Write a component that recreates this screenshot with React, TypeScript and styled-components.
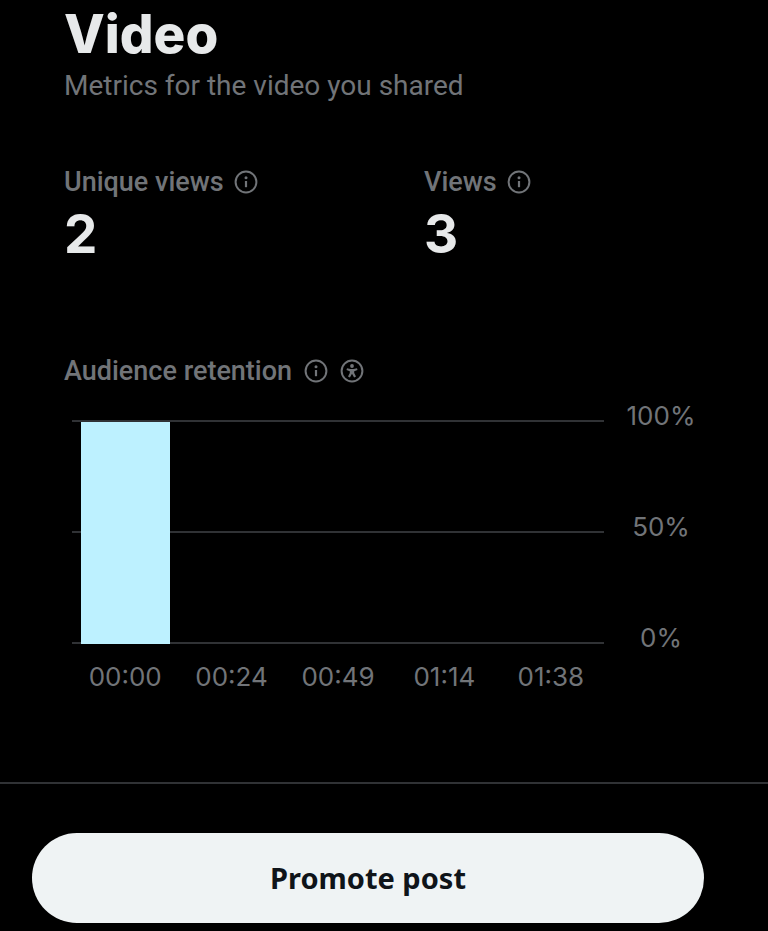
import React from "react";
import styled, { createGlobalStyle } from "styled-components";

const muted = "#717478";
const line = "#303235";

const GlobalStyle = createGlobalStyle`
  *, *::before, *::after { box-sizing: border-box; }
  body {
    margin: 0;
    background: #000;
    color: #e7e9ea;
    font-family: Roboto, "Noto Sans", sans-serif;
  }
  h1, h2, p, dl, dt, dd { margin: 0; font-weight: 400; }
`;

const Page = styled.main`
  display: flex;
  flex-direction: column;
`;

const Metrics = styled.section`
  padding: 0 0 89px 64px;
`;

const Title = styled.h1`
  && { font-weight: 800; }
  font-family: Inter, sans-serif;
  font-size: 53px;
  line-height: 68px;
`;

const Subtitle = styled.p`
  color: ${muted};
  font-size: 28px;
  line-height: 36px;
`;

const Stats = styled.dl`
  display: grid;
  grid-template-columns: 1fr 1fr;
  gap: 16px;
  padding-top: 60px;
`;

const Label = styled.dt`
  && { font-weight: 500; }
  display: flex;
  align-items: center;
  gap: 10px;
  color: ${muted};
  font-size: 27px;
  line-height: 36px;
`;

const Value = styled.dd`
  && { font-weight: 700; }
  font-family: Inter, sans-serif;
  font-size: 53px;
  line-height: 68px;
`;

const ChartHeading = styled.h2`
  && { font-weight: 500; }
  display: flex;
  align-items: center;
  gap: 12px;
  padding-top: 85px;
  color: ${muted};
  font-size: 27px;
  line-height: 36px;
`;

const IconButton = styled.button`
  display: flex;
  padding: 0;
  border: 0;
  background: none;
  color: inherit;
  cursor: pointer;
`;

const Chart = styled.div`
  display: grid;
  grid-template-columns: 1fr 114px;
  padding: 11px 50px 0 8px;
  color: ${muted};
  font-family: Inter, sans-serif;
  font-size: 26px;
  line-height: 32px;
`;

const Plot = styled.div`
  display: grid;
  height: 224px;
  margin-top: 20px;
`;

const GridLines = styled.div`
  grid-area: 1 / 1;
  display: flex;
  flex-direction: column;
  justify-content: space-between;
`;

const GridLine = styled.div`
  height: 2px;
  background: ${line};
`;

const Bars = styled.div`
  grid-area: 1 / 1;
  display: grid;
  grid-template-columns: repeat(5, 1fr);
  align-items: end;
  justify-items: center;
  padding-top: 2px;
`;

const Bar = styled.div`
  width: 84%;
  background: #bdf1ff;
`;

const YAxis = styled.div`
  display: flex;
  flex-direction: column;
  justify-content: space-between;
  align-items: center;
  height: 254px;
`;

const XAxis = styled.div`
  display: grid;
  grid-template-columns: repeat(5, 1fr);
  padding-top: 7px;
  text-align: center;
`;

const Footer = styled.footer`
  padding: 49px 64px 8px 32px;
  border-top: 2px solid ${line};
`;

const PromoteButton = styled.button`
  width: 100%;
  height: 90px;
  border: 0;
  border-radius: 45px;
  background: #eff3f4;
  color: #0f1419;
  font-family: "Noto Sans", sans-serif;
  font-weight: 700;
  font-size: 29px;
  line-height: 36px;
  cursor: pointer;
`;

const InfoIcon = () => (
  <svg width="24" height="24" viewBox="0 0 24 24" fill="none" aria-hidden="true">
    <circle cx="12" cy="12" r="10.4" stroke="currentColor" strokeWidth="2" />
    <circle cx="12" cy="7.7" r="1.5" fill="currentColor" />
    <path d="M12 11v6.2" stroke="currentColor" strokeWidth="2.2" />
  </svg>
);

const AccessibilityIcon = () => (
  <svg width="24" height="24" viewBox="0 0 24 24" fill="none" aria-hidden="true">
    <circle cx="12" cy="12" r="10.4" stroke="currentColor" strokeWidth="2" />
    <circle cx="12" cy="7" r="1.9" fill="currentColor" />
    <path
      d="M7 9.2l3.400.9h3.200l3.400-.9.500 1.900-3.300 1.100v1.700l1.800 3.700-1.900.9-2.100-3.700-2.100 3.700-1.900-.9 1.800-3.700v-1.700l-3.300-1.100z"
      fill="currentColor"
    />
  </svg>
);

const stats = [
  { label: "Unique views", value: 2 },
  { label: "Views", value: 3 },
];

const retention = [
  { time: "00:00", percent: 100 },
  { time: "00:24", percent: 0 },
  { time: "00:49", percent: 0 },
  { time: "01:14", percent: 0 },
  { time: "01:38", percent: 0 },
];

const ticks = [100, 50, 0];

export default function App() {
  return (
    <Page>
      <GlobalStyle />
      <Metrics>
        <Title>Video</Title>
        <Subtitle>Metrics for the video you shared</Subtitle>
        <Stats>
          {stats.map((stat) => (
            <div key={stat.label}>
              <Label>
                {stat.label}
                <IconButton type="button" aria-label={`About ${stat.label}`}>
                  <InfoIcon />
                </IconButton>
              </Label>
              <Value>{stat.value}</Value>
            </div>
          ))}
        </Stats>
        <ChartHeading>
          Audience retention
          <IconButton type="button" aria-label="About audience retention">
            <InfoIcon />
          </IconButton>
          <IconButton type="button" aria-label="Accessible chart">
            <AccessibilityIcon />
          </IconButton>
        </ChartHeading>
        <Chart>
          <Plot>
            <GridLines>
              {ticks.map((tick) => (
                <GridLine key={tick} />
              ))}
            </GridLines>
            <Bars>
              {retention.map((point) => (
                <Bar key={point.time} style={{ height: `${point.percent}%` }} />
              ))}
            </Bars>
          </Plot>
          <YAxis>
            {ticks.map((tick) => (
              <span key={tick}>{tick}%</span>
            ))}
          </YAxis>
          <XAxis>
            {retention.map((point) => (
              <span key={point.time}>{point.time}</span>
            ))}
          </XAxis>
        </Chart>
      </Metrics>
      <Footer>
        <PromoteButton type="button">Promote post</PromoteButton>
      </Footer>
    </Page>
  );
}
